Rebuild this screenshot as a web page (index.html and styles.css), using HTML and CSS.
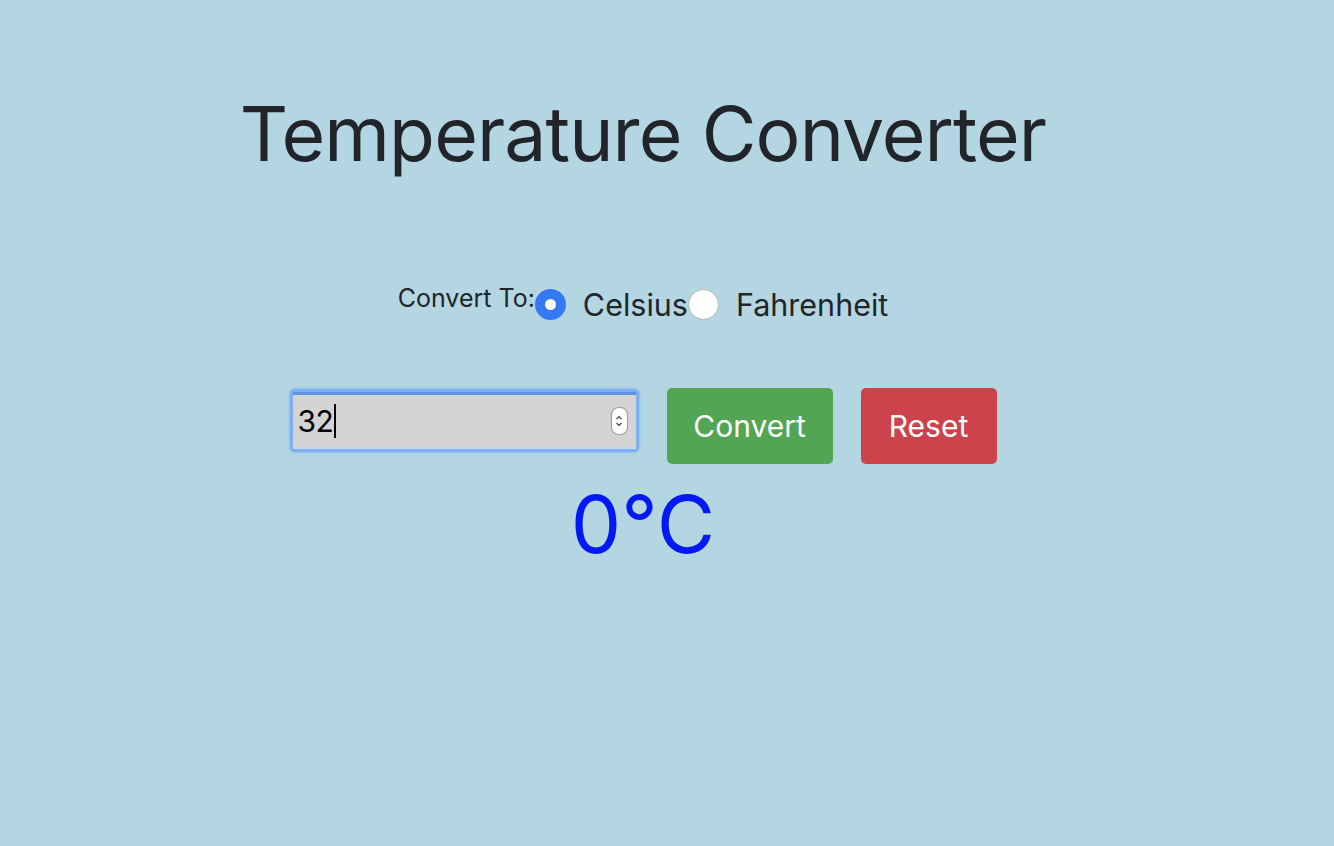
FILE: index.html
```html
<!DOCTYPE html>
<html>
<head>
<meta charset="utf-8">
<link rel="stylesheet" href="styles.css">
</head>
<body>
<main class="app">
  <h1 class="title">Temperature Converter</h1>
  <div class="convert-row">
    <span class="label">Convert To:</span>
    <span class="radio checked"></span>
    <span class="option">Celsius</span>
    <span class="radio"></span>
    <span class="option">Fahrenheit</span>
  </div>
  <div class="input-row">
    <div class="input-wrap">
      <div class="input">
        <span class="value">32</span><span class="caret"></span>
        <span class="spinner">
          <svg width="12" height="20" viewBox="0 0 12 20"><path d="M3.5 8 L6 5.5 L8.5 8" fill="none" stroke="#444" stroke-width="1.2"/><path d="M3.5 12 L6 14.5 L8.5 12" fill="none" stroke="#444" stroke-width="1.2"/></svg>
        </span>
      </div>
    </div>
    <button class="btn btn-green">Convert</button>
    <button class="btn btn-red">Reset</button>
  </div>
  <div class="result">0°C</div>
</main>
</body>
</html>
```

FILE: styles.css
```css
html, body {
  margin: 0;
  padding: 0;
  background: #b4d6e3;
  height: 100%;
}
body {
  font-family: Inter, "Liberation Sans", sans-serif;
  color: #212529;
}
.app {
  width: 1286px;
  display: flex;
  flex-direction: column;
  align-items: center;
}
.title {
  margin: 89px 0 0 0;
  font-size: 75px;
  font-weight: 400;
  line-height: 90px;
  letter-spacing: -0.9px;
}
.convert-row {
  margin-top: 105px;
  display: flex;
  align-items: center;
  height: 40px;
}
.label {
  font-size: 25px;
  align-self: flex-start;
  margin-top: -1px;
  line-height: 30px;
}
.radio {
  width: 31px;
  height: 31px;
  border-radius: 50%;
  background: #fff;
  border: 1px solid #b5b5b5;
  box-sizing: border-box;
  position: relative;
}
.radio.checked {
  background: #3478f6;
  border: none;
}
.radio.checked::after {
  content: "";
  position: absolute;
  width: 11px;
  height: 11px;
  left: 10px;
  top: 10px;
  border-radius: 50%;
  background: #fff;
}
.option {
  font-size: 30.5px;
  margin-left: 17px;
}
.input-row {
  margin-top: 64px;
  display: flex;
  align-items: center;
  gap: 28px;
}
.input-wrap {
  align-self: flex-start;
  margin-top: 1px;
  padding: 3px;
  border-radius: 5px;
  background: #7eb0ef;
  box-shadow: 0 0 2px 1px #8fbcf2;
}
.input {
  width: 343px;
  height: 57px;
  box-sizing: border-box;
  background: #d4d4d4;
  border-top: 3px solid #5f93e0;
  border-bottom: 2px solid #c8d8ee;
  display: flex;
  align-items: center;
  padding-left: 5px;
  padding-right: 9px;
}
.value {
  font-size: 30px;
  color: #000;
  letter-spacing: -0.5px;
}
.caret {
  width: 2px;
  height: 34px;
  background: #000;
  margin-left: 1px;
}
.spinner {
  margin-left: auto;
  width: 15px;
  height: 26px;
  background: #fff;
  border-radius: 7px;
  box-shadow: 0 0 1px 1px #9a9a9a;
  display: flex;
  align-items: center;
  justify-content: center;
}
.btn {
  font-family: Inter, "Liberation Sans", sans-serif;
  border: none;
  border-radius: 5px;
  color: #fff;
  font-size: 30px;
  height: 76px;
  padding: 0;
}
.btn-green {
  background: #52a552;
  width: 166px;
}
.btn-red {
  background: #cd434b;
  width: 136px;
}
.result {
  margin-top: 15px;
  font-size: 80px;
  line-height: 90px;
  color: #0019f5;
}
```
